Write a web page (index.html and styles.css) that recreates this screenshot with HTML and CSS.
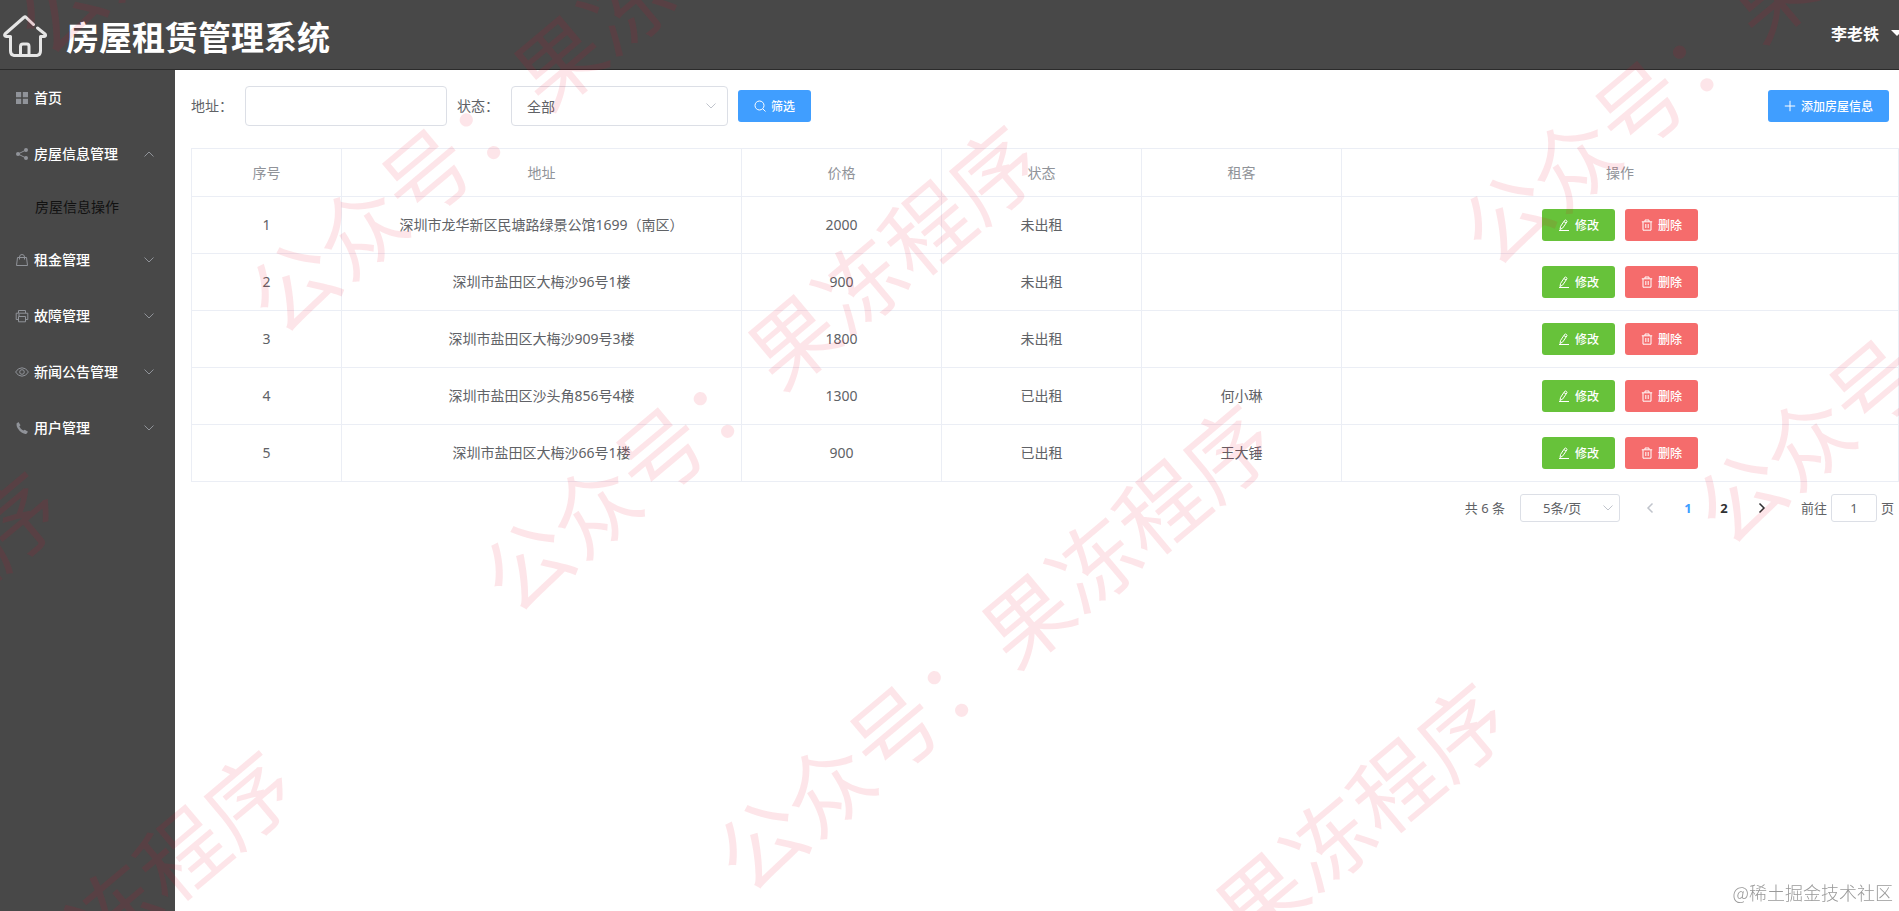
FILE: index.html
```html
<!DOCTYPE html>
<html lang="zh-CN">
<head>
<meta charset="utf-8">
<title>房屋租赁管理系统</title>
<link rel="stylesheet" href="styles.css">
</head>
<body>
<svg class="sprite" aria-hidden="true">
  <symbol id="i-edit" viewBox="0 0 12 12"><path d="M2.6 7.4 6.6 1.4Q7.2.7 8 1.2L8.6 1.6Q9.3 2.2 8.8 3L4.8 8.9 2 10.5ZM1 11.5H11M6 2.6 8 4"/></symbol>
  <symbol id="i-del" viewBox="0 0 12 12"><path d="M.8 2.8H11.2M4 2.6V1H8V2.6M2 3V11.2H10V3M4.8 5V9M7.2 5V9"/></symbol>
  <symbol id="i-down" viewBox="0 0 12 12"><path d="M1.5 3.5 6 8 10.5 3.5"/></symbol>
</svg>
<header class="header">
  <svg class="logo" viewBox="0 0 44 44" aria-hidden="true"><path d="M30.5 9.500 23.200 2.500Q22 1.300 20.800 2.500L2 19Q.8 21 3.500 21.500H7.500V36Q7.500 40 11 40.500H34Q37.500 40 37.500 36V21.500H41Q43.500 21 42 19L34.500 13M17.500 40V31.500Q17.500 29 20 29H24Q26 29 26 31.500V40"/></svg>
  <h1 class="title">房屋租赁管理系统</h1>
  <button class="user" type="button">李老铁<span class="caret"></span></button>
</header>
<div class="body">
  <nav class="side">
    <a class="item" href="#"><svg class="mi fill" viewBox="0 0 14 14"><path d="M1 1H6.200V6.200H1ZM7.800 1H13V6.200H7.800ZM1 7.800H6.200V13H1ZM7.800 7.800H13V13H7.800Z"/></svg>首页</a>
    <a class="item" href="#"><svg class="mi" viewBox="0 0 14 14"><path d="M4 6.500 10 3.500M4 7.500 10 10.500"/><g class="dots"><circle cx="3" cy="7" r="2"/><circle cx="11" cy="3" r="2"/><circle cx="11" cy="11" r="2"/></g></svg>房屋信息管理<svg class="arr up"><use href="#i-down"/></svg></a>
    <a class="item sub" href="#">房屋信息操作</a>
    <a class="item" href="#"><svg class="mi" viewBox="0 0 14 14"><path d="M2.500 4.500H11.500L12.500 12.500H1.500ZM4.500 6.500V4Q4.500 1.500 7 1.500T9.500 4V6.500"/></svg>租金管理<svg class="arr"><use href="#i-down"/></svg></a>
    <a class="item" href="#"><svg class="mi" viewBox="0 0 14 14"><path d="M3.500 4V1.500H10.500V4M3.500 10.500H1.200V4.200H12.800V10.500H10.500M3.500 7.500H10.500V12.800H3.500ZM3 6H5"/></svg>故障管理<svg class="arr"><use href="#i-down"/></svg></a>
    <a class="item" href="#"><svg class="mi" viewBox="0 0 14 14"><path d="M.6 7Q3 2.800 7 2.800T13.400 7Q11 11.200 7 11.200T.6 7Z"/><circle cx="7" cy="7" r="2.300"/></svg>新闻公告管理<svg class="arr"><use href="#i-down"/></svg></a>
    <a class="item" href="#"><svg class="mi fill" viewBox="0 0 14 14"><path d="M1.500 2.500 3.500 1 5.500 4.300 4.300 5.600Q5.600 8.200 8.300 9.600L9.800 8.700 13 10.800 11.500 12.700Q9.800 13.400 7 11.800 1 7.500 1.500 2.500Z"/></svg>用户管理<svg class="arr"><use href="#i-down"/></svg></a>
  </nav>
  <main class="main">
    <form class="filter">
      <label class="lab" for="addr">地址：</label>
      <input class="box addr" id="addr" type="text">
      <label class="lab" for="state">状态：</label>
      <span class="selwrap"><select class="box state" id="state"><option>全部</option></select><svg class="selarr"><use href="#i-down"/></svg></span>
      <button class="btn blue" type="button"><svg class="bi" viewBox="0 0 12 12"><circle cx="5.500" cy="5.500" r="4.500"/><path d="M8.800 8.800 11.500 11.500"/></svg>筛选</button>
      <button class="btn blue add" type="button"><svg class="bi" viewBox="0 0 12 12"><path d="M6 .8V11.200M.8 6H11.200"/></svg>添加房屋信息</button>
    </form>
    <table class="table">
      <colgroup><col class="c1"><col class="c2"><col class="c3"><col class="c3"><col class="c3"><col></colgroup>
      <thead><tr><th>序号</th><th>地址</th><th>价格</th><th>状态</th><th>租客</th><th>操作</th></tr></thead>
      <tbody>
        <tr><td>1</td><td>深圳市龙华新区民塘路绿景公馆1699（南区）</td><td>2000</td><td>未出租</td><td></td><td><div class="ops"><button class="btn green" type="button"><svg class="bi"><use href="#i-edit"/></svg>修改</button><button class="btn red" type="button"><svg class="bi"><use href="#i-del"/></svg>删除</button></div></td></tr>
        <tr><td>2</td><td>深圳市盐田区大梅沙96号1楼</td><td>900</td><td>未出租</td><td></td><td><div class="ops"><button class="btn green" type="button"><svg class="bi"><use href="#i-edit"/></svg>修改</button><button class="btn red" type="button"><svg class="bi"><use href="#i-del"/></svg>删除</button></div></td></tr>
        <tr><td>3</td><td>深圳市盐田区大梅沙909号3楼</td><td>1800</td><td>未出租</td><td></td><td><div class="ops"><button class="btn green" type="button"><svg class="bi"><use href="#i-edit"/></svg>修改</button><button class="btn red" type="button"><svg class="bi"><use href="#i-del"/></svg>删除</button></div></td></tr>
        <tr><td>4</td><td>深圳市盐田区沙头角856号4楼</td><td>1300</td><td>已出租</td><td>何小琳</td><td><div class="ops"><button class="btn green" type="button"><svg class="bi"><use href="#i-edit"/></svg>修改</button><button class="btn red" type="button"><svg class="bi"><use href="#i-del"/></svg>删除</button></div></td></tr>
        <tr><td>5</td><td>深圳市盐田区大梅沙66号1楼</td><td>900</td><td>已出租</td><td>王大锤</td><td><div class="ops"><button class="btn green" type="button"><svg class="bi"><use href="#i-edit"/></svg>修改</button><button class="btn red" type="button"><svg class="bi"><use href="#i-del"/></svg>删除</button></div></td></tr>
      </tbody>
    </table>
    <div class="pager">
      <span class="total">共 6 条</span>
      <span class="selwrap"><select class="box size" aria-label="每页条数"><option>5条/页</option></select><svg class="selarr small"><use href="#i-down"/></svg></span>
      <div class="pages">
        <button class="pg step off" type="button" aria-label="上一页"><svg class="pi left"><use href="#i-down"/></svg></button>
        <button class="pg on" type="button">1</button>
        <button class="pg" type="button">2</button>
        <button class="pg step" type="button" aria-label="下一页"><svg class="pi right"><use href="#i-down"/></svg></button>
      </div>
      <label class="jump">前往<input class="box goto" type="text" value="1">页</label>
    </div>
  </main>
</div>
<svg class="marks" aria-hidden="true">
  <g transform="translate(281 339) rotate(-40)">
    <text x="0" y="-364">公众号：果冻程序</text>
    <text x="0" y="0">公众号：果冻程序</text>
    <text x="0" y="364">公众号：果冻程序</text>
    <text x="0" y="728">公众号：果冻程序</text>
    <text x="-973" y="0">公众号：果冻程序</text>
    <text x="-973" y="364">公众号：果冻程序</text>
    <text x="973" y="728">公众号：果冻程序</text>
    <text x="973" y="1092">公众号：果冻程序</text>
    <text x="0" y="1092">公众号：果冻程序</text>
  </g>
</svg>
<span class="credit">@稀土掘金技术社区</span>
</body>
</html>
```
FILE: styles.css
```css
* { box-sizing: border-box; }
body {
  margin: 0;
  min-height: 100vh;
  display: flex;
  flex-direction: column;
  overflow: hidden;
  background: #fff;
  color: #606266;
  font: 14px/20px "Noto Sans", "Noto Sans CJK SC", sans-serif;
}
button, input, select { font-family: inherit; }
svg { fill: none; stroke: currentColor; }
.sprite { position: absolute; width: 0; height: 0; }

.header {
  display: flex;
  align-items: center;
  height: 70px;
  padding-left: 3px;
  background: #484848;
  border-bottom: 1px solid #2b2b2b;
  color: #fff;
}
.logo { width: 44px; height: 44px; margin-top: 4px; stroke: #e6e6e6; stroke-width: 3; stroke-linecap: round; stroke-linejoin: round; }
.title { margin: 0 0 0 19px; padding-top: 6px; font-size: 33px; line-height: 40px; font-weight: 700; }
.user {
  display: flex;
  align-items: center;
  gap: 12px;
  margin-left: auto;
  margin-right: -4px;
  padding: 0 0 4px;
  border: 0;
  background: none;
  color: #fff;
  font-size: 16px;
  font-weight: 700;
}
.caret { border: 6px solid transparent; border-top-color: #fff; border-bottom: 0; }

.body { display: flex; flex: 1; }
.side { flex: none; width: 175px; background: #484848; }
.item {
  display: flex;
  align-items: center;
  height: 56px;
  padding: 0 20px 0 15px;
  color: #fff;
  font-weight: 500;
  text-decoration: none;
}
.mi { width: 14px; height: 14px; margin-right: 5px; color: #909399; }
.mi.fill, .dots { fill: currentColor; stroke: none; }
.arr { width: 12px; height: 12px; margin-left: auto; color: #909399; }
.up { transform: rotate(180deg); }
.item.sub { height: 50px; padding-left: 35px; color: #111; font-weight: 400; }

.main { flex: 1; min-width: 0; padding: 16px 0 0 16px; }
.filter { display: flex; align-items: center; margin-bottom: 22px; padding-right: 10px; }
.lab { width: 54px; }
.box {
  height: 40px;
  padding: 0 15px;
  border: 1px solid #dcdfe6;
  border-radius: 4px;
  background: #fff;
  color: #606266;
  font-size: 14px;
  appearance: none;
}
.addr { width: 202px; margin-right: 10px; }
.selwrap { position: relative; display: flex; }
.state { width: 217px; }
.selarr { position: absolute; right: 11px; top: 14px; width: 12px; height: 12px; color: #c0c4cc; }
.btn {
  display: flex;
  align-items: center;
  justify-content: center;
  gap: 5px;
  height: 32px;
  padding: 0 16px;
  border: 0;
  border-radius: 3px;
  color: #fff;
  font-size: 12px;
  font-weight: 500;
}
.bi { width: 12px; height: 12px; }
.blue { margin-left: 10px; background: #409eff; }
.add { margin-left: auto; }
.green { background: #67c23a; }
.red { background: #f56c6c; }

.table {
  width: 100%;
  table-layout: fixed;
  border-collapse: separate;
  border-spacing: 0;
  border-top: 1px solid #ebeef5;
  border-left: 1px solid #ebeef5;
}
.c1 { width: 150px; }
.c2 { width: 400px; }
.c3 { width: 200px; }
.table th, .table td {
  height: 57px;
  padding: 0;
  border-right: 1px solid #ebeef5;
  border-bottom: 1px solid #ebeef5;
  text-align: center;
}
.table th { height: 48px; color: #909399; font-weight: 400; }
.ops { display: flex; justify-content: center; gap: 10px; }

.pager {
  display: flex;
  align-items: center;
  justify-content: flex-end;
  padding: 12px 5px 0 0;
  font-size: 13px;
}
.total { margin-right: 15px; }
.size { width: 100px; height: 28px; padding: 0 22px; font-size: 13px; border-radius: 3px; }
.selarr.small { top: 8px; right: 6px; }
.pages { display: flex; margin: 0 19px 0 10px; }
.pg {
  display: flex;
  align-items: center;
  justify-content: center;
  width: 36px;
  height: 28px;
  padding: 0;
  border: 0;
  background: none;
  color: #303133;
  font-size: 13px;
  font-weight: 700;
}
.step { width: 40px; }
.on { color: #409eff; }
.off { color: #c0c4cc; }
.pi { width: 12px; height: 12px; stroke-width: 1.5; }
.left { transform: rotate(90deg); }
.right { transform: rotate(-90deg); }
.jump { display: flex; align-items: center; gap: 4px; }
.goto { width: 46px; height: 28px; padding: 0; text-align: center; border-radius: 3px; font-size: 13px; }

.marks { position: fixed; inset: 0; width: 100%; height: 100%; pointer-events: none; }
.marks text {
  fill: rgba(240, 0, 40, .1);
  stroke: none;
  font: 87px "Noto Sans CJK SC", sans-serif;
}
.credit {
  position: fixed;
  right: 6px;
  bottom: 6px;
  color: #999;
  font: 300 18px/26px "Noto Sans CJK SC", sans-serif;
}
```
